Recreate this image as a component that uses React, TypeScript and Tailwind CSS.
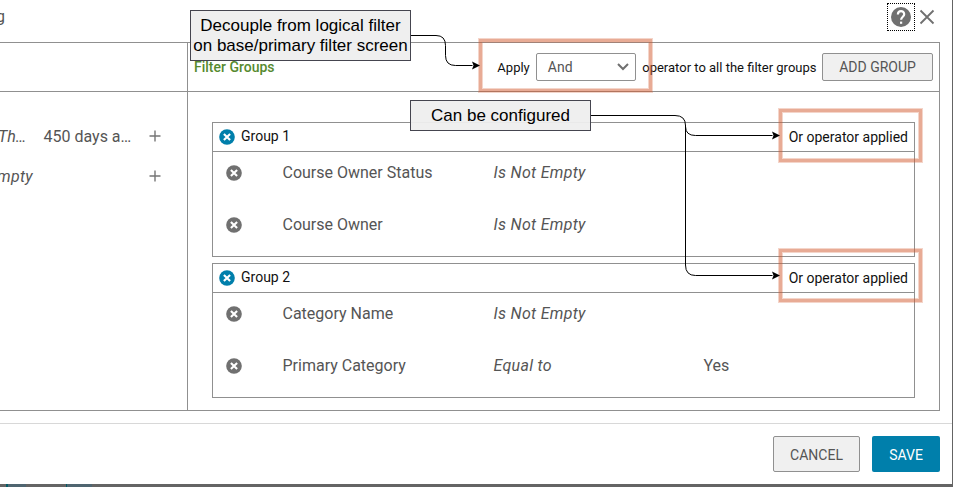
import type { ReactNode } from 'react';

const line = 'border-[#909090]';

function RemoveIcon({ color }: { color: string }) {
  return (
    <svg width="16" height="16" viewBox="0 0 16 16" className="shrink-0">
      <circle cx="8" cy="8" r="7.8" fill={color} />
      <path d="M4.900 4.900l6.200 6.200M11.100 4.900l-6.200 6.200" stroke="#fff" strokeWidth="2.1" />
    </svg>
  );
}

function PlusIcon() {
  return (
    <svg width="12" height="12" viewBox="0 0 12 12" className="shrink-0">
      <path d="M6 0.5v11M0.5 6h11" stroke="#757575" strokeWidth="1.4" />
    </svg>
  );
}

type Rule = { field: string; op: string; value?: string };

function Group({ title, rules }: { title: string; rules: Rule[] }) {
  return (
    <section className={`h-[135px] w-[703px] border ${line}`}>
      <header className={`flex h-[29px] items-center border-b pl-[6px] pr-[6px] text-[14px] text-[#111] ${line}`}>
        <RemoveIcon color="#007fab" />
        <span className="ml-[6px] pb-[2px]">{title}</span>
        <span className="ml-auto">Or operator applied</span>
      </header>
      <div className="pt-[8px]">
        {rules.map((r) => (
          <div key={r.field} className="mb-[26px] flex h-[26px] items-center pl-[13px] text-[16px] text-[#555]">
            <RemoveIcon color="#707070" />
            <span className="ml-[40.5px] w-[211px]">{r.field}</span>
            <span className="w-[210px] italic tracking-[0.3px]">{r.op}</span>
            <span>{r.value}</span>
          </div>
        ))}
      </div>
    </section>
  );
}

function Callout({ className, children }: { className: string; children: ReactNode }) {
  return (
    <div className={`absolute flex items-center justify-center whitespace-nowrap border border-[#45454f] bg-[#eeeeee]/95 text-center font-['Liberation_Sans',Arial,sans-serif] text-[17px] leading-[20px] text-black ${className}`}>
      {children}
    </div>
  );
}

function Highlight({ className }: { className: string }) {
  return (
    <div className={`absolute border border-[#d2572c]/25 ${className}`}>
      <div className="h-full w-full border-3 border-[#d2572c]/50">
        <div className="h-full w-full border border-[#d2572c]/25" />
      </div>
    </div>
  );
}

export default function App() {
  return (
    <div className="relative h-[488px] w-[954px] overflow-hidden bg-white font-[Roboto,'Liberation_Sans',sans-serif]">
      <div className="h-[487px] w-[953px] bg-[#646464]">
        <main className="flex h-[484px] w-[952px] flex-col bg-white">
          <div className="flex h-[42px] items-center pr-[17px]">
            <span className="-ml-[4px] pb-[8px] text-[16px] text-[#555]">g</span>
            <button className="mb-[8px] ml-auto flex h-[28px] w-[28px] items-center justify-center border border-dotted border-black">
              <svg width="20" height="20" viewBox="0 0 20 20">
                <circle cx="10" cy="10" r="10" fill="#707070" />
                <path d="M6.900 7.600c0-4.700 6.300-4.500 6.300-.4 0 2.500-3.100 2.600-3.100 5.600" fill="none" stroke="#fff" strokeWidth="2.200" />
                <path d="M9 14.600h2.200v2.200H9z" fill="#fff" />
              </svg>
            </button>
            <svg width="16" height="16" viewBox="0 0 16 16" className="mb-[8px] ml-[4px]">
              <path d="M1.5 1.5l13 13M14.500 1.500l-13 13" stroke="#707070" strokeWidth="1.800" />
            </svg>
          </div>

          <div className={`flex h-[369px] w-[940px] border-y border-r ${line}`}>
            <aside className={`w-[188px] border-r ${line}`}>
              <div className={`h-[49px] border-b ${line}`} />
              <div className="mt-[24px] flex h-[40px] items-center whitespace-nowrap text-[16px] text-[#555]">
                <span className="-ml-[2px] w-[45.500px] pt-[1px] italic">Th…</span>
                <span className="w-[105.500px] pt-[1px]">450 days a…</span>
                <PlusIcon />
              </div>
              <div className="flex h-[40px] items-center whitespace-nowrap text-[16px] text-[#555]">
                <span className="-ml-[3px] w-[152px] pt-[1px] italic tracking-[0.3px]">mpty</span>
                <PlusIcon />
              </div>
            </aside>

            <div className="flex-1">
              <div className={`flex h-[49px] items-center border-b pl-[6px] pr-[6px] text-[13px] text-[#111] ${line}`}>
                <h2 className="text-[14px] font-medium text-[#568a2f]">Filter Groups</h2>
                <span className="ml-auto pt-[1px]">Apply</span>
                <div className={`ml-[6px] mr-[6.500px] flex h-[28px] w-[100px] items-center justify-between rounded-[2px] border pl-[11px] pr-[6px] text-[14px] text-[#555] ${line}`}>
                  <span className="pt-[1px]">And</span>
                  <svg width="12" height="8" viewBox="0 0 12 8">
                    <path d="M1 1l5 5 5-5" fill="none" stroke="#707070" strokeWidth="2" />
                  </svg>
                </div>
                <span className="-mr-[0.500px] pt-[1px]">operator to all the filter groups</span>
                <button className={`ml-[6px] h-[28px] w-[111px] rounded-[2px] border bg-[#f0f0f0] text-[14px] text-[#555] ${line}`}>ADD GROUP</button>
              </div>
              <div className="flex flex-col gap-[6px] pl-[24px] pt-[30px]">
                <Group
                  title="Group 1"
                  rules={[
                    { field: 'Course Owner Status', op: 'Is Not Empty' },
                    { field: 'Course Owner', op: 'Is Not Empty' },
                  ]}
                />
                <Group
                  title="Group 2"
                  rules={[
                    { field: 'Category Name', op: 'Is Not Empty' },
                    { field: 'Primary Category', op: 'Equal to', value: 'Yes' },
                  ]}
                />
              </div>
            </div>
          </div>

          <footer className="mt-[12px] flex flex-1 items-start justify-end gap-[12px] border-t border-[#d8d8d8] pr-[12px] pt-[12px] text-[14px]">
            <button className={`h-[36px] w-[87px] rounded-[2px] border bg-[#f0f0f0] pt-[2px] text-[#555] ${line}`}>CANCEL</button>
            <button className="h-[36px] w-[68px] rounded-[2px] bg-[#007fab] pt-[2px] text-white">SAVE</button>
          </footer>
        </main>
        <div className="flex h-[3px] pl-[6px]">
          <div className="w-[2px] bg-[#045a66]" />
          <div className="w-[18px] bg-[#4f6570]" />
          <div className="ml-[40px] w-[1px] bg-[#045a66]" />
          <div className="w-[25px] bg-[#4f6570]" />
        </div>
      </div>

      <Highlight className="left-[478px] top-[38px] h-[55px] w-[175px]" />
      <Highlight className="left-[778px] top-[108px] h-[55px] w-[145px]" />
      <Highlight className="left-[778px] top-[248px] h-[55px] w-[145px]" />

      <svg width="954" height="488" viewBox="0 0 954 488" className="absolute left-0 top-0" fill="none" stroke="#000">
        <path d="M411 35.5h25q9.500 0 9.500 10v10q0 10 10 10h17" />
        <path d="M591 115.500h84q10.500 0 10.500 10v1q0 9 10 9h77" />
        <path d="M685.500 125v140q0 10.500 10 10.500h77" />
        <g fill="#000" stroke="none">
          <path d="M480 65.500l-8-4 1.500 4-1.500 4z" />
          <path d="M780 135.500l-8-4 1.500 4-1.500 4z" />
          <path d="M780 275.500l-8-4 1.500 4-1.500 4z" />
        </g>
      </svg>

      <Callout className="left-[190px] top-[10px] h-[51px] w-[221px]">
        <span>Decouple from logical filter<br />on base/primary filter screen</span>
      </Callout>
      <Callout className="left-[410px] top-[100px] h-[31px] w-[181px]">Can be configured</Callout>
    </div>
  );
}
